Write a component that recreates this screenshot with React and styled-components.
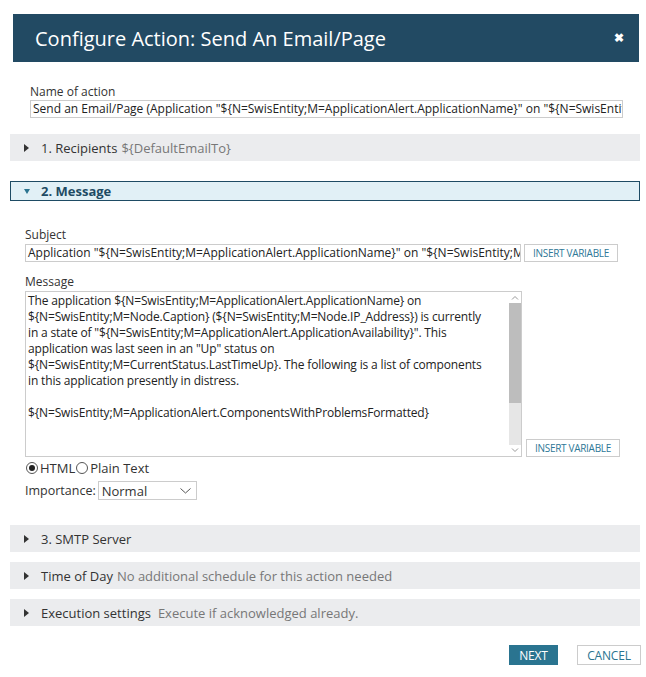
import React from 'react';
import styled, { createGlobalStyle } from 'styled-components';

const GlobalStyle = createGlobalStyle`
    html, body {
        margin: 0;
        padding: 0;
        background: #fff;
    }
    body {
        font-family: "Open Sans", "Liberation Sans", sans-serif;
        color: #333;
    }
`;

const Page = styled.div`
    width: 646px;
    height: 677px;
    padding-top: 14px;
    box-sizing: border-box;
    display: flex;
    flex-direction: column;
`;

const Header = styled.div`
    margin: 0 7px 0 13px;
    height: 48px;
    background-color: #224a63;
    display: flex;
    align-items: center;
    justify-content: space-between;
    padding: 0 14px 0 22px;
    color: #fff;
`;

const Title = styled.div`
    font-size: 20px;
`;

const Close = styled.div`
    font-size: 12px;
    font-weight: bold;
    line-height: 1;
    margin-right: 1px;
`;

const NameField = styled.div`
    margin: 23px 0 0 30px;
    width: 593px;
    display: flex;
    flex-direction: column;
`;

const Label = styled.div`
    font-size: 12px;
    line-height: 14px;
    color: #333;
    margin-top: ${({ top }) => top || 0}px;
    margin-bottom: ${({ gap }) => gap || 1}px;
`;

const TextInput = styled.div`
    height: 18px;
    box-sizing: border-box;
    border: 1px solid #ccc;
    font-size: 12px;
    line-height: 16px;
    padding: 0 2px;
    white-space: nowrap;
    overflow: hidden;
    color: #222;
    width: ${({ width }) => width || 'auto'};
`;

const Bar = styled.div`
    margin: ${({ top }) => top}px 6px 0 10px;
    height: ${({ open }) => (open ? 20 : 27)}px;
    box-sizing: border-box;
    background-color: ${({ open }) => (open ? '#e1f0f6' : '#ebecee')};
    border: ${({ open }) => (open ? '1px solid #1e4b64' : 'none')};
    display: flex;
    align-items: center;
    padding-left: ${({ open }) => (open ? 13 : 14)}px;
    font-size: 13px;
`;

const Arrow = styled.span`
    width: 0;
    height: 0;
    margin-right: ${({ open }) => (open ? 11 : 12)}px;
    border-style: solid;
    ${({ open }) =>
        open
            ? 'border-width: 5px 3.5px 0 3.5px; border-color: #2a7490 transparent transparent transparent;'
            : 'border-width: 4px 0 4px 5px; border-color: transparent transparent transparent #333;'}
`;

const BarTitle = styled.span`
    color: ${({ open }) => (open ? '#1e4b64' : '#333')};
    font-weight: ${({ open }) => (open ? 'bold' : 'normal')};
    margin-right: ${({ gap }) => gap || 4}px;
`;

const BarNote = styled.span`
    color: #777;
`;

const MessageBody = styled.div`
    margin: 27px 0 0 25px;
    display: flex;
    flex-direction: column;
`;

const Row = styled.div`
    display: flex;
    align-items: ${({ align }) => align || 'center'};
    gap: ${({ gap }) => gap || 3}px;
`;

const SmallButton = styled.div`
    width: 94px;
    height: 18px;
    box-sizing: border-box;
    border: 1px solid #ccc;
    color: #2e7897;
    font-size: 10px;
    letter-spacing: -0.3px;
    display: flex;
    align-items: center;
    justify-content: center;
    background: #fff;
    flex-shrink: 0;
`;

const TextArea = styled.div`
    width: 497px;
    height: 166px;
    box-sizing: border-box;
    border: 1px solid #ccc;
    display: flex;
`;

const AreaText = styled.div`
    flex: 1;
    padding: 1px 2px;
    font-size: 12px;
    line-height: 16px;
    color: #222;
    white-space: pre-line;
    letter-spacing: -0.15px;
`;

const ScrollTrack = styled.div`
    width: 12px;
    background: #e6e6e6;
    display: flex;
    flex-direction: column;
    align-items: center;
`;

const ScrollArrow = styled.div`
    height: 11px;
    display: flex;
    align-items: center;
    justify-content: center;
    width: 100%;
    background: #fff;
`;

const ScrollThumb = styled.div`
    width: 100%;
    height: 100px;
    background: #bdbdbd;
`;

const Spacer = styled.div`
    flex: 1;
`;

const RadioGroup = styled.div`
    display: flex;
    align-items: center;
    margin-top: 3px;
    font-size: 13px;
    height: 16px;
`;

const Radio = styled.span`
    width: 12px;
    height: 12px;
    box-sizing: border-box;
    border-radius: 50%;
    border: 1px solid #555;
    display: inline-flex;
    align-items: center;
    justify-content: center;
    margin: 0 2px 0 ${({ first }) => (first ? 1 : 0)}px;
    &::after {
        content: '';
        width: 6px;
        height: 6px;
        border-radius: 50%;
        background: ${({ checked }) => (checked ? '#222' : 'transparent')};
    }
`;

const RadioLabel = styled.span`
    margin-right: ${({ gap }) => gap || 0}px;
`;

const ImportanceRow = styled.div`
    display: flex;
    align-items: center;
    gap: 2px;
    margin-top: 5px;
    font-size: 12.5px;
`;

const Select = styled.div`
    width: 99px;
    height: 19px;
    box-sizing: border-box;
    border: 1px solid #ccc;
    display: flex;
    align-items: center;
    justify-content: space-between;
    padding: 0 5px 0 3px;
    font-size: 13px;
`;

const Footer = styled.div`
    margin: 19px 5px 0 0;
    display: flex;
    justify-content: flex-end;
    gap: 19px;
`;

const Button = styled.div`
    height: 20px;
    box-sizing: border-box;
    display: flex;
    align-items: center;
    justify-content: center;
    font-size: 12px;
    letter-spacing: -0.2px;
    background: ${({ primary }) => (primary ? '#2a7490' : '#fff')};
    color: ${({ primary }) => (primary ? '#fff' : '#2a7490')};
    border: ${({ primary }) => (primary ? 'none' : '1px solid #ccc')};
    width: ${({ primary }) => (primary ? 49 : 64)}px;
`;

const Chevron = ({ up }) => (
    <svg width="8" height="5" viewBox="0 0 8 5">
        <path d={up ? 'M1 4.5 L4 1.5 L7 4.5' : 'M1 0.5 L4 3.5 L7 0.5'} fill="none" stroke="#999" strokeWidth="1" />
    </svg>
);

const message = `The application \${N=SwisEntity;M=ApplicationAlert.ApplicationName} on
\${N=SwisEntity;M=Node.Caption} (\${N=SwisEntity;M=Node.IP_Address}) is currently
in a state of "\${N=SwisEntity;M=ApplicationAlert.ApplicationAvailability}". This
application was last seen in an "Up" status on
\${N=SwisEntity;M=CurrentStatus.LastTimeUp}. The following is a list of components
in this application presently in distress.

\${N=SwisEntity;M=ApplicationAlert.ComponentsWithProblemsFormatted}`;

const App = () => (
    <Page>
        <GlobalStyle />
        <Header>
            <Title>Configure Action: Send An Email/Page</Title>
            <Close>✖</Close>
        </Header>

        <NameField>
            <Label>Name of action</Label>
            <TextInput>
                Send an Email/Page (Application "${'{'}N=SwisEntity;M=ApplicationAlert.ApplicationName{'}'}" on "${'{'}N=SwisEntit
            </TextInput>
        </NameField>

        <Bar top={16}>
            <Arrow />
            <BarTitle>1. Recipients</BarTitle>
            <BarNote>${'{'}DefaultEmailTo{'}'}</BarNote>
        </Bar>

        <Bar top={20} open>
            <Arrow open />
            <BarTitle open>2. Message</BarTitle>
        </Bar>

        <MessageBody>
            <Label gap={2}>Subject</Label>
            <Row>
                <TextInput width="496px">
                    Application "${'{'}N=SwisEntity;M=ApplicationAlert.ApplicationName{'}'}" on "${'{'}N=SwisEntity;M
                </TextInput>
                <SmallButton>INSERT VARIABLE</SmallButton>
            </Row>

            <Label gap={2} top={13}>Message</Label>
            <Row align="flex-end" gap={4}>
                <TextArea>
                    <AreaText>{message}</AreaText>
                    <ScrollTrack>
                        <ScrollArrow><Chevron up /></ScrollArrow>
                        <ScrollThumb />
                        <Spacer />
                        <ScrollArrow><Chevron /></ScrollArrow>
                    </ScrollTrack>
                </TextArea>
                <SmallButton>INSERT VARIABLE</SmallButton>
            </Row>

            <RadioGroup>
                <Radio checked first />
                <RadioLabel gap={1}>HTML</RadioLabel>
                <Radio />
                <RadioLabel>Plain Text</RadioLabel>
            </RadioGroup>

            <ImportanceRow>
                <span>Importance:</span>
                <Select>
                    <span>Normal</span>
                    <svg width="11" height="6" viewBox="0 0 11 6">
                        <path d="M0.5 0.5 L5.5 5 L10.5 0.5" fill="none" stroke="#555" strokeWidth="1" />
                    </svg>
                </Select>
            </ImportanceRow>
        </MessageBody>

        <Bar top={25}>
            <Arrow />
            <BarTitle>3. SMTP Server</BarTitle>
        </Bar>

        <Bar top={10}>
            <Arrow />
            <BarTitle>Time of Day</BarTitle>
            <BarNote>No additional schedule for this action needed</BarNote>
        </Bar>

        <Bar top={10}>
            <Arrow />
            <BarTitle gap={7}>Execution settings</BarTitle>
            <BarNote>Execute if acknowledged already.</BarNote>
        </Bar>

        <Footer>
            <Button primary>NEXT</Button>
            <Button>CANCEL</Button>
        </Footer>
    </Page>
);

export default App;
